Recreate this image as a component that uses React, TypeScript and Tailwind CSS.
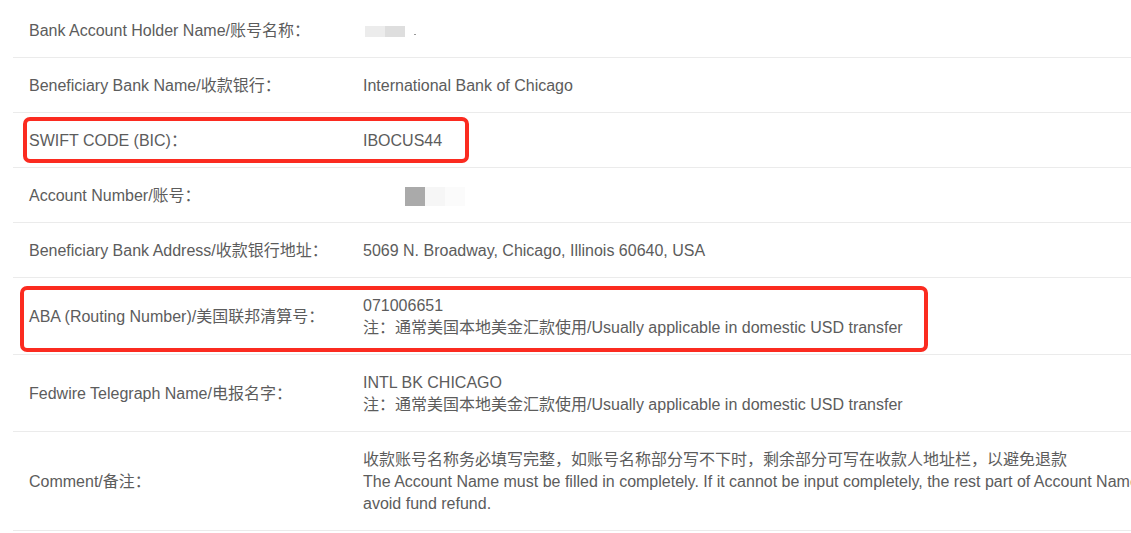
const rows: { label: string; value: React.ReactNode }[] = [
  {
    label: "Bank Account Holder Name/账号名称：",
    value: (
      <div className="flex h-[22px] items-center">
        <span className="ml-[2px] h-[11px] w-[20px] bg-[#ececec]" />
        <span className="h-[11px] w-[20px] bg-[#dedede]" />
        <span className="ml-[9px] mt-[6px] h-[1px] w-[2px] bg-[#999]" />
      </div>
    ),
  },
  { label: "Beneficiary Bank Name/收款银行：", value: "International Bank of Chicago" },
  { label: "SWIFT CODE (BIC)：", value: "IBOCUS44" },
  {
    label: "Account Number/账号：",
    value: (
      <div className="flex h-[22px] items-center">
        <span className="ml-[42px] h-[19px] w-[20px] bg-[#aaaaaa]" />
        <span className="h-[19px] w-[20px] bg-[#f6f6f6]" />
        <span className="h-[19px] w-[20px] bg-[#fbfbfb]" />
      </div>
    ),
  },
  {
    label: "Beneficiary Bank Address/收款银行地址：",
    value: "5069 N. Broadway, Chicago, Illinois 60640, USA",
  },
  {
    label: "ABA (Routing Number)/美国联邦清算号：",
    value: (
      <>
        <div>071006651</div>
        <div>注：通常美国本地美金汇款使用/Usually applicable in domestic USD transfer</div>
      </>
    ),
  },
  {
    label: "Fedwire Telegraph Name/电报名字：",
    value: (
      <>
        <div>INTL BK CHICAGO</div>
        <div>注：通常美国本地美金汇款使用/Usually applicable in domestic USD transfer</div>
      </>
    ),
  },
  {
    label: "Comment/备注：",
    value: (
      <>
        <div className="whitespace-nowrap">
          收款账号名称务必填写完整，如账号名称部分写不下时，剩余部分可写在收款人地址栏，以避免退款
        </div>
        <div className="whitespace-nowrap">
          The Account Name must be filled in completely. If it cannot be input completely, the rest part of Account Name can be filled in the address column of beneficiary to
        </div>
        <div className="whitespace-nowrap">avoid fund refund.</div>
      </>
    ),
  },
];

export default function App() {
  return (
    <div
      className="relative h-[533px] w-[1131px] overflow-hidden bg-white pt-[3px] text-[16px] leading-[22px] text-[#5c5c5c]"
      style={{ fontFamily: '"Liberation Sans", "Noto Sans CJK SC", sans-serif' }}
    >
      <div className="ml-[13px] w-[1400px]">
        {rows.map((row) => (
          <div key={row.label} className="flex items-center border-b border-[#ebebeb] pb-[15px] pt-[17px]">
            <div className="w-[350px] shrink-0 whitespace-nowrap pl-[16px]">{row.label}</div>
            <div className="flex-1">{row.value}</div>
          </div>
        ))}
      </div>

      {/* red annotation boxes */}
      <div className="absolute left-[23px] top-[117px] h-[46px] w-[446px] rounded-[7px] border-[4px] border-[#fb2b20]" />
      <div className="absolute left-[20px] top-[286px] h-[66px] w-[908px] rounded-[7px] border-[4px] border-[#fb2b20]" />
    </div>
  );
}
